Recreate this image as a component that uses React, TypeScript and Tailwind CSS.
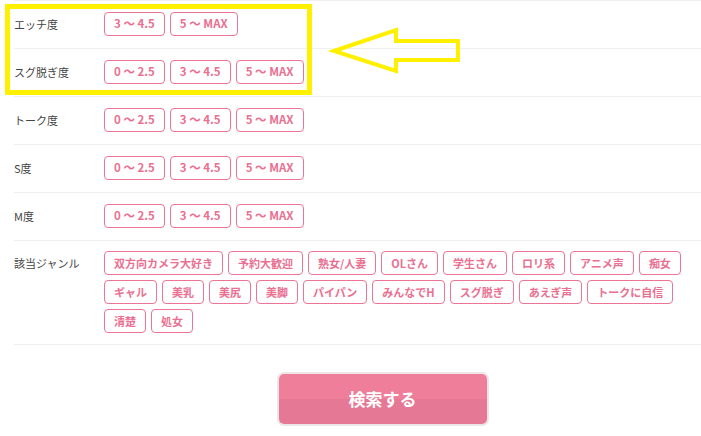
const ranges3 = ["0 〜 2.5", "3 〜 4.5", "5 〜 MAX"];

const rows = [
  { label: "エッチ度", items: ["3 〜 4.5", "5 〜 MAX"] },
  { label: "スグ脱ぎ度", items: ranges3 },
  { label: "トーク度", items: ranges3 },
  { label: "S度", items: ranges3 },
  { label: "M度", items: ranges3 },
];

const genres = [
  "双方向カメラ大好き", "予約大歓迎", "熟女/人妻", "OLさん", "学生さん", "ロリ系", "アニメ声", "痴女",
  "ギャル", "美乳", "美尻", "美脚", "パイパン", "みんなでH", "スグ脱ぎ", "あえぎ声", "トークに自信",
  "清楚", "処女",
];

const Tag = ({ text, genre }: { text: string; genre?: boolean }) => (
  <span
    className={`flex h-6 items-center rounded-[4px] border border-[#ec7596] bg-white px-[9px] font-bold text-[#ea7091] ${
      genre ? "text-[11px]" : "text-[11.5px]"
    }`}
  >
    {text}
  </span>
);

const Row = ({ label, items, genre }: { label: string; items: string[]; genre?: boolean }) => (
  <div className={`flex border-b border-[#efefef] ${genre ? "pt-[10px] pb-[11px]" : "pt-[11px] pb-3"}`}>
    <div className="flex h-6 w-[90px] shrink-0 items-center text-[11px] text-[#444]">{label}</div>
    <div className={`flex flex-wrap gap-x-[5px] ${genre ? "w-[600px] gap-y-[5px]" : ""}`}>
      {items.map((t, i) => (
        <Tag key={i} text={t} genre={genre} />
      ))}
    </div>
  </div>
);

export default function App() {
  return (
    <div
      className="relative h-[436px] w-[701px] overflow-hidden bg-white"
      style={{ fontFamily: '"Noto Sans CJK JP", "Noto Sans", sans-serif' }}
    >
      <div className="ml-[14px] w-[737px]">
        <div className="border-t border-[#efefef]">
          {rows.map((r) => (
            <Row key={r.label} label={r.label} items={r.items} />
          ))}
          <Row label="該当ジャンル" items={genres} genre />
        </div>
        <div className="flex justify-center pt-[27px]">
          <button className="flex h-[54px] w-[212px] flex-col overflow-hidden rounded-[7px] border-2 border-[#ece6e9]">
            <span className="flex h-full w-full items-center justify-center bg-[linear-gradient(#ef7e9b_0,#ef7e9b_50%,#e57894_50%,#e57894_100%)] text-[17px] font-bold text-white">
              検索する
            </span>
          </button>
        </div>
      </div>

      {/* highlight overlay */}
      <div className="absolute left-[5px] top-[4px] h-[91px] w-[307px] border-[5px] border-[#fff000]" />
      <svg className="absolute left-0 top-0" width="701" height="436" viewBox="0 0 701 436">
        <polygon
          points="334,51 396,30 396,41 458,41 458,60 396,60 396,71"
          fill="none"
          stroke="#fff000"
          strokeWidth="4"
          strokeLinejoin="miter"
        />
      </svg>
    </div>
  );
}
